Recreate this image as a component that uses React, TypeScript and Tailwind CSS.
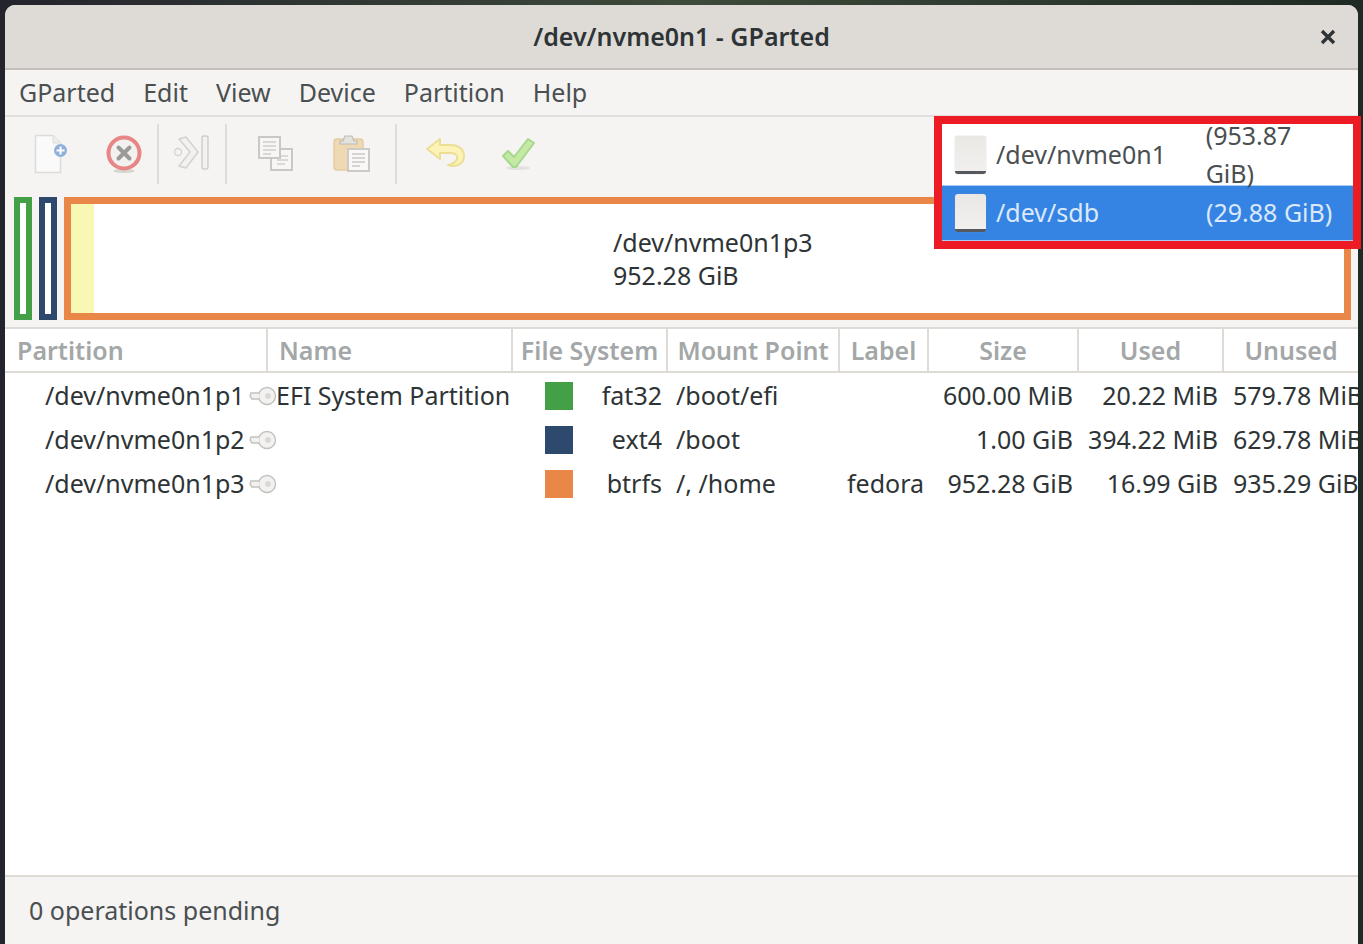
import React from "react";

const FONT = "font-['Noto_Sans','Open_Sans',sans-serif]";

const NewIcon = () => (
  <svg width="36" height="42" viewBox="0 0 36 42">
    <path d="M2.5 2.5H20L27.5 10V39.5H2.5Z" fill="#fafafa" stroke="#dddcd9" strokeWidth="1.5" />
    <path d="M20 2.5V10H27.5" fill="#eeeeec" stroke="#dddcd9" strokeWidth="1" />
    <circle cx="27.5" cy="17.5" r="6.5" fill="#8fb0dc" />
    <path d="M27.5 13.5V21.5M23.5 17.5H31.5" stroke="#fff" strokeWidth="2" />
  </svg>
);

const DeleteIcon = () => (
  <svg width="38" height="40" viewBox="0 0 38 40">
    <ellipse cx="19" cy="37" rx="11" ry="2" fill="#d8d6d3" />
    <circle cx="19" cy="19" r="15.5" fill="#f3f1ef" stroke="#e88585" strokeWidth="4" />
    <path d="M13.5 13.5L24.5 24.5M24.5 13.5L13.5 24.5" stroke="#9a9a98" strokeWidth="4" strokeLinecap="round" />
  </svg>
);

const ResizeIcon = () => (
  <svg width="38" height="40" viewBox="0 0 38 40">
    <circle cx="5" cy="18" r="3.5" fill="#f5f4f2" stroke="#d3d2cf" strokeWidth="1.3" />
    <path d="M6 5L13 3L25 18L13 34L6 32L17 18Z" fill="#f2f1ef" stroke="#d3d2cf" strokeWidth="1.5" strokeLinejoin="round" />
    <rect x="29" y="2" width="6" height="33" rx="2" fill="#f2f1ef" stroke="#cfcecb" strokeWidth="1.5" />
  </svg>
);

const CopyIcon = () => (
  <svg width="38" height="38" viewBox="0 0 38 38">
    <rect x="14" y="14" width="21" height="21" fill="#f7f6f4" stroke="#c9c8c5" strokeWidth="2" />
    <path d="M20 21H31M20 25H31M20 29H28" stroke="#d0cfcc" strokeWidth="1.5" />
    <rect x="2" y="2" width="21" height="21" fill="#f7f6f4" stroke="#c9c8c5" strokeWidth="2" />
    <path d="M6 7H19M6 11H19M6 15H19M6 19H14" stroke="#cfcecb" strokeWidth="1.5" />
  </svg>
);

const PasteIcon = () => (
  <svg width="38" height="40" viewBox="0 0 38 40">
    <rect x="1" y="5" width="29" height="31" rx="3" fill="#efd9b3" stroke="#e4cda4" strokeWidth="1.5" />
    <path d="M10 7L12 2H19L21 7H24V10H7V7Z" fill="#e3e2df" stroke="#bdbcb9" strokeWidth="1.2" />
    <rect x="15" y="15" width="21" height="22" fill="#f9f8f6" stroke="#cbcac7" strokeWidth="2" />
    <path d="M19 20H32M19 24H32M19 28H32M19 32H27" stroke="#c9c8c5" strokeWidth="1.5" />
  </svg>
);

const UndoIcon = () => (
  <svg width="42" height="34" viewBox="0 0 42 34">
    <path d="M15 2L2 12L15 22V16H26C31 16 33 19 32 22C31 26 27 27 23 28C30 31 39 27 39 19C39 12 33 8 26 8H15Z" fill="#fbf3b8" stroke="#ecdf95" strokeWidth="2" strokeLinejoin="round" />
  </svg>
);

const ApplyIcon = () => (
  <svg width="36" height="34" viewBox="0 0 36 34">
    <ellipse cx="17" cy="31" rx="12" ry="2" fill="#e3e2df" />
    <path d="M2 19L7 14L13 20L27 2L33 6L15 30H12Z" fill="#c5e8a5" stroke="#a6d98c" strokeWidth="2" strokeLinejoin="round" />
  </svg>
);

const KeyIcon = () => (
  <svg width="28" height="20" viewBox="0 0 28 20">
    <circle cx="18" cy="10" r="8.5" fill="#f3f2f0" stroke="#c2c1be" strokeWidth="1.4" />
    <circle cx="19" cy="10" r="3" fill="#dad9d6" />
    <path d="M10 7H2L1 10L3 13H10" fill="#f3f2f0" stroke="#c2c1be" strokeWidth="1.4" />
  </svg>
);

const DiskIcon = () => (
  <div className="h-[38px] w-[31px] shrink-0 rounded-[3px] border-b-[3px] border-b-[#55585c] bg-gradient-to-b from-[#e9e8e5] to-[#f1f0ee] shadow-[0_0_1px_#9a9a98]" />
);

const Separator = () => <div className="mx-[14px] h-[60px] w-[2px] bg-[#dedddb]" />;

const rows = [
  { part: "/dev/nvme0n1p1", name: "EFI System Partition", color: "bg-[#43a047]", fs: "fat32", mount: "/boot/efi", label: "", size: "600.00 MiB", used: "20.22 MiB", unused: "579.78 MiB" },
  { part: "/dev/nvme0n1p2", name: "", color: "bg-[#2d4a6e]", fs: "ext4", mount: "/boot", label: "", size: "1.00 GiB", used: "394.22 MiB", unused: "629.78 MiB" },
  { part: "/dev/nvme0n1p3", name: "", color: "bg-[#e88747]", fs: "btrfs", mount: "/, /home", label: "fedora", size: "952.28 GiB", used: "16.99 GiB", unused: "935.29 GiB" },
];

const headCell = "flex h-full items-center border-r-2 border-[#dedbd6] font-semibold text-[#a3a7a8]";

export default function App() {
  return (
    <div className={`${FONT} relative h-[944px] w-[1363px] overflow-hidden bg-gradient-to-r from-[#23242c] via-[#3e4a3a] to-[#1f2a24] px-[5px] pt-[5px] text-[25px] text-[#2e3436]`}>
      <div className="flex h-[939px] flex-col overflow-hidden rounded-t-[10px] bg-[#f5f4f2]">
        <header className="relative flex h-[65px] shrink-0 items-center justify-center border-b-2 border-[#c3c0ba] bg-[#dedbd7]">
          <span className="font-semibold text-[#2e3436]">/dev/nvme0n1 - GParted</span>
          <svg className="absolute right-[22px] top-[24px]" width="16" height="16" viewBox="0 0 16 16">
            <path d="M2 2L14 14M14 2L2 14" stroke="#2e3436" strokeWidth="3.4" />
          </svg>
        </header>

        <nav className="flex h-[47px] shrink-0 items-center gap-[28px] border-b-2 border-[#e0dfdc] pl-[14px] text-[#4a4f51]">
          <span>GParted</span>
          <span>Edit</span>
          <span>View</span>
          <span>Device</span>
          <span>Partition</span>
          <span>Help</span>
        </nav>

        <div className="flex h-[80px] shrink-0 items-center pl-[28px] pb-[6px] blur-[0.5px]">
          <div className="w-[72px]"><NewIcon /></div>
          <DeleteIcon />
          <Separator />
          <ResizeIcon />
          <Separator />
          <div className="ml-[16px] w-[76px]"><CopyIcon /></div>
          <PasteIcon />
          <div className="ml-[10px]"><Separator /></div>
          <div className="ml-[14px] w-[76px]"><UndoIcon /></div>
          <ApplyIcon />
        </div>

        <section className="flex h-[123px] shrink-0 gap-[7px] pl-[9px] pr-[7px]">
          <div className="w-[18px] border-[6px] border-[#43a047] bg-white" />
          <div className="w-[18px] border-[6px] border-[#2d4a6e] bg-white" />
          <div className="flex flex-1 border-[7px] border-[#e88747] bg-white">
            <div className="w-[23px] bg-[#f8f8b4]" />
            <div className="flex flex-1 flex-col justify-center pl-[519px] leading-[33px]">
              <span>/dev/nvme0n1p3</span>
              <span>952.28 GiB</span>
            </div>
          </div>
        </section>

        <div className="mt-[7px] flex min-h-0 flex-1 flex-col border-y-2 border-[#dedbd6] bg-white">
          <div className="flex h-[44px] shrink-0 border-b-2 border-[#dedbd6] leading-none">
            <div className={`${headCell} w-[263px] pl-[12px]`}>Partition</div>
            <div className={`${headCell} w-[245px] pl-[11px]`}>Name</div>
            <div className={`${headCell} w-[155px] justify-center`}>File System</div>
            <div className={`${headCell} w-[172px] justify-center`}>Mount Point</div>
            <div className={`${headCell} w-[89px] justify-center`}>Label</div>
            <div className={`${headCell} w-[150px] justify-center`}>Size</div>
            <div className={`${headCell} w-[145px] justify-center`}>Used</div>
            <div className="flex h-full flex-1 items-center justify-center font-semibold text-[#a3a7a8]">Unused</div>
          </div>
          <div className="pt-[1px]">
            {rows.map((r) => (
              <div key={r.part} className="flex h-[44px] items-center overflow-hidden whitespace-nowrap">
                <div className="flex w-[263px] items-center pl-[40px]">
                  <span>{r.part}</span>
                  <span className="ml-[4px]"><KeyIcon /></span>
                </div>
                <div className="w-[245px] pl-[8px]">{r.name}</div>
                <div className="flex w-[155px] items-center pl-[32px]">
                  <div className={`h-[28px] w-[28px] ${r.color}`} />
                  <div className="flex-1 pr-[6px] text-right">{r.fs}</div>
                </div>
                <div className="w-[172px] pl-[8px]">{r.mount}</div>
                <div className="w-[89px] pl-[7px]">{r.label}</div>
                <div className="w-[150px] pr-[6px] text-right">{r.size}</div>
                <div className="w-[145px] pr-[6px] text-right">{r.used}</div>
                <div className="w-[134px] overflow-hidden pl-[9px]">{r.unused}</div>
              </div>
            ))}
          </div>
        </div>

        <footer className="flex h-[67px] shrink-0 items-center pl-[24px] text-[#4a4f51]">0 operations pending</footer>
      </div>

      {/* device dropdown, open over the graph */}
      <div className="absolute left-[934px] top-[116px] w-[427px] border-[8px] border-[#ed1c24] bg-white">
        <div className="flex h-[61px] items-center pl-[13px] pr-[7px] text-[#4a4f51]">
          <DiskIcon />
          <span className="ml-[10px] w-[210px]">/dev/nvme0n1</span>
          <span>(953.87 GiB)</span>
        </div>
        <div className="flex h-[56px] items-center border-y border-[#a9cdf2] bg-[#3584e4] pl-[13px] text-[#dbe9fa]">
          <DiskIcon />
          <span className="ml-[10px] w-[210px]">/dev/sdb</span>
          <span>(29.88 GiB)</span>
        </div>
      </div>
    </div>
  );
}
